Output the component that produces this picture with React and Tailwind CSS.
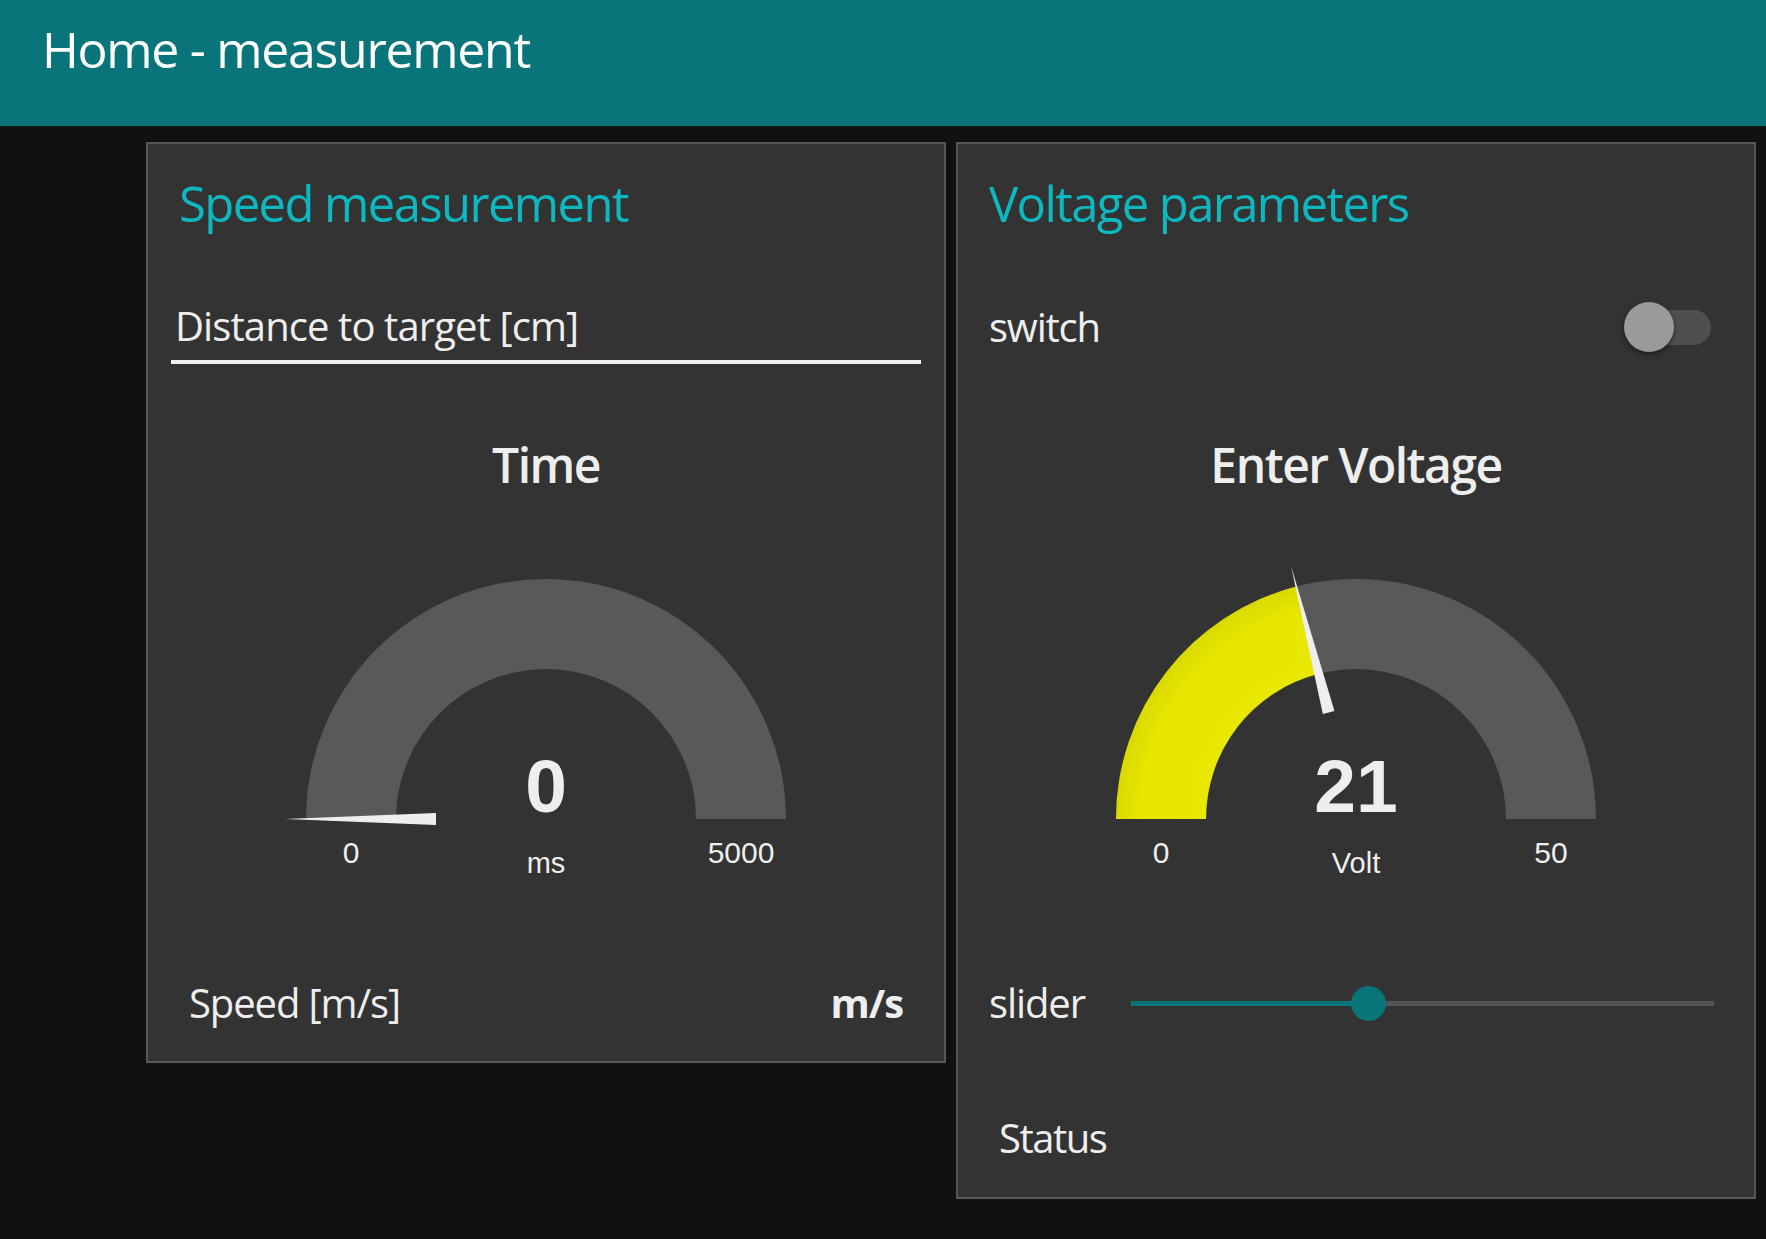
import React from "react";

const UI = { fontFamily: '"Open Sans", "Noto Sans", sans-serif' };
const ARIAL = '"Liberation Sans", Arial, sans-serif';

function Gauge({ value, min, max, unit }) {
  const cx = 398;
  const cy = 329;
  const R = 240;
  const r = 150;
  const frac = (value - min) / (max - min);
  const th = frac * Math.PI;
  const ox = cx - R * Math.cos(th);
  const oy = cy - R * Math.sin(th);
  const ix = cx - r * Math.cos(th);
  const iy = cy - r * Math.sin(th);
  const deg = (frac * 180).toFixed(2);
  return (
    <svg width="796" height="400" viewBox="0 0 796 400" className="block">
      <defs>
        <radialGradient id={"yg" + value} cx={cx} cy={cy} r={R} gradientUnits="userSpaceOnUse">
          <stop offset="0.62" stopColor="#e8e800" />
          <stop offset="0.9" stopColor="#e6e600" />
          <stop offset="1" stopColor="#d9d900" />
        </radialGradient>
      </defs>
      <path
        d={`M ${cx - R} ${cy} A ${R} ${R} 0 0 1 ${cx + R} ${cy} L ${cx + r} ${cy} A ${r} ${r} 0 0 0 ${cx - r} ${cy} Z`}
        fill="#595959"
      />
      {frac > 0 && (
        <path
          d={`M ${cx - R} ${cy} A ${R} ${R} 0 0 1 ${ox.toFixed(2)} ${oy.toFixed(2)} L ${ix.toFixed(2)} ${iy.toFixed(2)} A ${r} ${r} 0 0 0 ${cx - r} ${cy} Z`}
          fill={`url(#yg${value})`}
        />
      )}
      <polygon
        points={`${cx - 110},${cy - 6} ${cx - 110},${cy + 6} ${cx - 261},${cy}`}
        fill="#eeeeee"
        transform={`rotate(${deg} ${cx} ${cy})`}
      />
      <text x={cx} y={322} textAnchor="middle" fill="#eeeeee" fontFamily={ARIAL} fontWeight="700" fontSize="75">
        {value}
      </text>
      <text x={cx - 195} y={373} textAnchor="middle" fill="#eeeeee" fontFamily={ARIAL} fontSize="30">
        {min}
      </text>
      <text x={cx + 195} y={373} textAnchor="middle" fill="#eeeeee" fontFamily={ARIAL} fontSize="30">
        {max}
      </text>
      <text x={cx} y={383} textAnchor="middle" fill="#eeeeee" fontFamily={ARIAL} fontSize="29">
        {unit}
      </text>
    </svg>
  );
}

function Panel({ children }) {
  return (
    <div className="w-[800px] border-2 border-[#575757] bg-[#333333] flex flex-col">{children}</div>
  );
}

function Title({ children }) {
  return (
    <div className="mt-[34px] h-[50px] pl-[31px] text-[49px] leading-[50px] tracking-[-1.6px] text-[#0eb8c0] whitespace-nowrap">
      {children}
    </div>
  );
}

function GaugeTitle({ children }) {
  return (
    <div className="h-[48px] text-center text-[48px] leading-[48px] tracking-[-1.5px] font-semibold text-[#eeeeee] whitespace-nowrap">
      {children}
    </div>
  );
}

export default function App() {
  return (
    <div className="min-h-[1239px] w-full bg-[#111111] text-[#eeeeee]" style={UI}>
      <div className="h-[126px] bg-[#097479] pl-[42px] pt-[24px]">
        <div className="text-[50px] leading-[50px] tracking-[-1.3px] text-white whitespace-nowrap">Home - measurement</div>
      </div>
      <div className="flex items-start gap-[10px] pl-[146px] pt-[16px]">
        <Panel>
          <Title>Speed measurement</Title>
          <div className="mt-[78px] h-[40px] pl-[27px] text-[40px] leading-[40px] tracking-[-0.9px] whitespace-nowrap">
            Distance to target [cm]
          </div>
          <div className="mt-[14px] ml-[23px] h-[4px] w-[750px] bg-[#eeeeee]" />
          <div className="mt-[77px]">
            <GaugeTitle>Time</GaugeTitle>
          </div>
          <div className="mt-[1px]">
            <Gauge value={0} min={0} max={5000} unit="ms" />
          </div>
          <div className="mt-[93px] flex h-[40px] items-center justify-between pl-[41px] pr-[41px] text-[40px] leading-[40px] tracking-[-1.1px] mb-[38px]">
            <span>Speed [m/s]</span>
            <span className="font-bold">m/s</span>
          </div>
        </Panel>
        <Panel>
          <Title>Voltage parameters</Title>
          <div className="mt-[79px] flex h-[40px] items-center justify-between pl-[31px] pr-[43px]">
            <span className="text-[40px] leading-[40px] tracking-[-1.2px]">switch</span>
            <div className="relative h-[50px] w-[87px]">
              <div className="absolute left-[2px] top-[8px] h-[35px] w-[85px] rounded-full bg-[#4f4f4f]" />
              <div className="absolute left-0 top-0 h-[50px] w-[50px] rounded-full bg-[#9a9a9a] shadow-[0_2px_5px_rgba(0,0,0,0.5)]" />
            </div>
          </div>
          <div className="mt-[94px]">
            <GaugeTitle>Enter Voltage</GaugeTitle>
          </div>
          <div className="mt-[1px]">
            <Gauge value={21} min={0} max={50} unit="Volt" />
          </div>
          <div className="mt-[93px] flex h-[40px] items-center pl-[31px]">
            <span className="w-[142px] text-[40px] leading-[40px] tracking-[-1.1px]">slider</span>
            <div className="relative h-[5px] w-[583px] bg-[#555555]">
              <div className="absolute left-0 top-0 h-[5px] w-[238px] bg-[#097479]" />
              <div className="absolute left-[220px] top-[-15px] h-[35px] w-[35px] rounded-full bg-[#097479]" />
            </div>
          </div>
          <div className="mt-[95px] h-[40px] pl-[41px] text-[40px] leading-[40px] tracking-[-1.5px] mb-[39px]">Status</div>
        </Panel>
      </div>
    </div>
  );
}
